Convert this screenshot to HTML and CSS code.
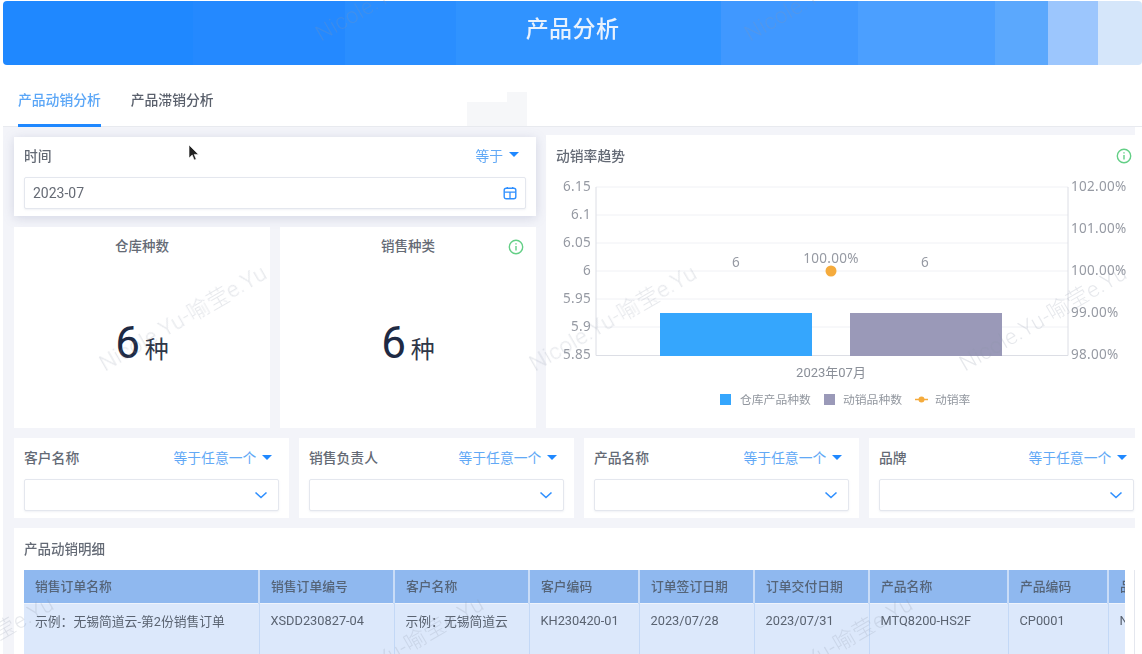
FILE: index.html
```html
<!DOCTYPE html>
<html lang="zh-CN">
<head>
<meta charset="utf-8">
<title>产品分析</title>
<link rel="stylesheet" href="styles.css">
</head>
<body>
<div class="page">
  <header class="banner"><h1>产品分析</h1></header>
  <nav class="tabs">
    <a class="tab active">产品动销分析</a>
    <a class="tab">产品滞销分析</a>
  </nav>
  <main class="content">
    <section class="top">
      <div class="left">
        <div class="card filter-time">
          <div class="fhead"><span class="flabel">时间</span><span class="fop">等于<i class="caret"></i></span></div>
          <div class="field"><span>2023-07</span>
            <svg class="cal" viewBox="0 0 14 14" width="14" height="14"><rect x="1.2" y="2.2" width="11.6" height="10.6" rx="2" fill="none" stroke="#2e8fff" stroke-width="1.4"/><path d="M1.5 6.200h11M7 6.200v6.400M4.300 1v2M9.700 1v2" fill="none" stroke="#2e8fff" stroke-width="1.3"/></svg>
          </div>
        </div>
        <div class="stats">
          <div class="card stat"><div class="stat-title">仓库种数</div><div class="stat-value"><b>6</b><span>种</span></div></div>
          <div class="card stat"><div class="stat-title">销售种类</div><div class="stat-value"><b>6</b><span>种</span></div>
            <svg class="info stat-info" viewBox="0 0 16 16" width="16" height="16"><circle cx="8" cy="8" r="6.7" fill="none" stroke="#63cf86" stroke-width="1.4"/><path d="M8 4.200v1.400M8 7v4.600" stroke="#63cf86" stroke-width="1.4"/></svg>
          </div>
        </div>
      </div>
      <div class="card chart">
        <div class="chart-head"><span class="flabel">动销率趋势</span>
          <svg class="info" viewBox="0 0 16 16" width="16" height="16"><circle cx="8" cy="8" r="6.7" fill="none" stroke="#63cf86" stroke-width="1.4"/><path d="M8 4.200v1.400M8 7v4.600" stroke="#63cf86" stroke-width="1.4"/></svg>
        </div>
        <svg class="plot" viewBox="546 170 596 258" width="596" height="258">
          <g class="grid">
            <path d="M596 187H1068M596 215H1068M596 243H1068M596 271H1068M596 299H1068M596 327H1068"/>
          </g>
          <path class="axis" d="M596 187V355.5H1068V187"/>
          <rect x="660" y="313" width="152" height="43" fill="#35a6fd"/>
          <rect x="850" y="313" width="152" height="43" fill="#9a99b8"/>
          <g class="tick end">
            <text x="591" y="191">6.15</text><text x="591" y="219">6.1</text><text x="591" y="247">6.05</text><text x="591" y="275">6</text><text x="591" y="303">5.95</text><text x="591" y="331">5.9</text><text x="591" y="359">5.85</text>
          </g>
          <g class="tick">
            <text x="1071" y="191">102.00%</text><text x="1071" y="233">101.00%</text><text x="1071" y="275">100.00%</text><text x="1071" y="317">99.00%</text><text x="1071" y="359">98.00%</text>
          </g>
          <g class="tick mid">
            <text x="736" y="267">6</text><text x="831" y="263">100.00%</text><text x="925" y="267">6</text>
          </g>
          <circle cx="831" cy="271" r="5.5" fill="#f5ab3c"/>
          <text class="xlabel" x="831" y="377">2023年07月</text>
          <rect x="720" y="394" width="11" height="11" fill="#35a6fd"/>
          <text class="legend" x="740" y="404">仓库产品种数</text>
          <rect x="824" y="394" width="11" height="11" fill="#9a99b8"/>
          <text class="legend" x="843" y="404">动销品种数</text>
          <path d="M915 399.500H928" stroke="#f5ab3c" stroke-width="1.500"/><circle cx="921.500" cy="399.500" r="3" fill="#f5ab3c"/>
          <text class="legend" x="935" y="404">动销率</text>
        </svg>
      </div>
    </section>
    <section class="filters">
      <div class="card filter"><div class="fhead"><span class="flabel">客户名称</span><span class="fop">等于任意一个<i class="caret"></i></span></div><div class="field"><svg class="chev" viewBox="0 0 14 8" width="14" height="8"><path d="M1.500 1.500 7 6.500l5.500-5" fill="none" stroke="#2e8fff" stroke-width="1.600"/></svg></div></div>
      <div class="card filter"><div class="fhead"><span class="flabel">销售负责人</span><span class="fop">等于任意一个<i class="caret"></i></span></div><div class="field"><svg class="chev" viewBox="0 0 14 8" width="14" height="8"><path d="M1.500 1.500 7 6.500l5.500-5" fill="none" stroke="#2e8fff" stroke-width="1.600"/></svg></div></div>
      <div class="card filter"><div class="fhead"><span class="flabel">产品名称</span><span class="fop">等于任意一个<i class="caret"></i></span></div><div class="field"><svg class="chev" viewBox="0 0 14 8" width="14" height="8"><path d="M1.500 1.500 7 6.500l5.500-5" fill="none" stroke="#2e8fff" stroke-width="1.600"/></svg></div></div>
      <div class="card filter"><div class="fhead"><span class="flabel">品牌</span><span class="fop">等于任意一个<i class="caret"></i></span></div><div class="field"><svg class="chev" viewBox="0 0 14 8" width="14" height="8"><path d="M1.500 1.500 7 6.500l5.500-5" fill="none" stroke="#2e8fff" stroke-width="1.600"/></svg></div></div>
    </section>
    <section class="card detail">
      <div class="detail-title">产品动销明细</div>
      <div class="table-wrap">
        <table>
          <colgroup>
            <col class="c1"><col class="c2"><col class="c3"><col class="c4"><col class="c5"><col class="c6"><col class="c7"><col class="c8"><col class="c9">
          </colgroup>
          <thead>
            <tr><th>销售订单名称</th><th>销售订单编号</th><th>客户名称</th><th>客户编码</th><th>订单签订日期</th><th>订单交付日期</th><th>产品名称</th><th>产品编码</th><th>品牌</th></tr>
          </thead>
          <tbody>
            <tr><td>示例：无锡简道云-第2份销售订单</td><td>XSDD230827-04</td><td>示例：无锡简道云</td><td>KH230420-01</td><td>2023/07/28</td><td>2023/07/31</td><td>MTQ8200-HS2F</td><td>CP0001</td><td>NE</td></tr>
          </tbody>
        </table>
      </div>
    </section>
  </main>
  <div class="smudge s1"></div>
  <div class="smudge s2"></div>
  <svg class="cursor" viewBox="0 0 12 18" width="12" height="18"><path d="M1 1v13l3.200-3 2 5 2-.8-2-4.800h4.300z" fill="#222" stroke="#fff" stroke-width=".6"/></svg>
  <span class="wm w1">Nicole.Yu-喻莹e.Yu</span>
  <span class="wm w2">Nicole.Yu-喻莹e.Yu</span>
  <span class="wm w3">Nicole.Yu-喻莹e.Yu</span>
  <span class="wm w4">Nicole.Yu-喻莹e.Yu</span>
  <span class="wm w5">Nicole.Yu-喻莹e.Yu</span>
  <span class="wm w6">Nicole.Yu-喻莹e.Yu</span>
  <span class="wm w7">Nicole.Yu-喻莹e.Yu</span>
  <span class="wm w8">Nicole.Yu-喻莹e.Yu</span>
</div>
</body>
</html>
```
FILE: styles.css
```css
* { box-sizing: border-box; }
html, body { margin: 0; padding: 0; background: #fff; }
body {
  font-family: Roboto, "Noto Sans CJK SC", sans-serif;
  color: #4c5360;
  width: 1142px;
  height: 654px;
  overflow: hidden;
}
.page {
  position: relative;
  width: 1142px;
  height: 654px;
  overflow: hidden;
  padding: 1px 0 0 3px;
  display: flex;
  flex-direction: column;
  filter: blur(0.5px);
}
.banner {
  height: 64px;
  flex: none;
  border-radius: 4px;
  background: linear-gradient(90deg,
    #1f88ff 0, #1f88ff 190px,
    #2489ff 190px, #2489ff 342px,
    #2a8eff 342px, #2a8eff 453px,
    #3093ff 453px, #3093ff 718px,
    #4098ff 718px, #4098ff 855px,
    #4b9fff 855px, #4b9fff 992px,
    #5ba8fd 992px, #5ba8fd 1045px,
    #9cc6fd 1045px, #9cc6fd 1095px,
    #d5e6fa 1095px);
  display: flex;
  align-items: center;
  justify-content: center;
}
.banner h1 {
  margin: 0 0 13px;
  font-size: 23px;
  font-weight: 500;
  letter-spacing: 0.4px;
  color: #e9f2fd;
}
.tabs {
  flex: none;
  height: 62px;
  display: flex;
  align-items: stretch;
  padding-left: 15px;
  gap: 30px;
  border-bottom: 1px solid #e8eaef;
}
.tab {
  font-size: 13.800px;
  font-weight: 500;
  display: flex;
  align-items: center;
  padding-top: 8px;
  color: #5a606c;
  border-bottom: 3px solid transparent;
  margin-bottom: -1px;
}
.tab.active { color: #5aa6f7; border-bottom-color: #1f88ff; }
.content {
  flex: 1;
  width: 1132px;
  min-height: 0;
  background: #f3f4f9;
  padding: 8px 0 0 11px;
  display: flex;
  flex-direction: column;
  gap: 10px;
}
.card { background: #fff; }
.top {
  flex: none;
  display: flex;
  gap: 10px;
  height: 293px;
}
.left {
  width: 522px;
  flex: none;
  padding-top: 2px;
  display: flex;
  flex-direction: column;
  gap: 11px;
}
.filter-time {
  height: 79px;
  padding: 0 10px;
  box-shadow: 0 2px 10px rgba(130, 136, 175, .28);
  position: relative;
}
.fhead {
  height: 40px;
  display: flex;
  align-items: center;
  justify-content: space-between;
  padding-right: 7px;
  padding-bottom: 5px;
}
.filter .fhead { height: 41px; padding-bottom: 3px; }
.flabel { font-size: 13.800px; color: #646a75; font-weight: 500; }
.fop { font-size: 13.800px; color: #62a9f6; display: flex; align-items: center; }
.caret {
  display: inline-block;
  margin-left: 6px;
  width: 0; height: 0;
  border-left: 5.500px solid transparent;
  border-right: 5.500px solid transparent;
  border-top: 5.500px solid #1f88ff;
}
.field {
  height: 32px;
  border: 1px solid #e4e7ee;
  border-radius: 2px;
  display: flex;
  align-items: center;
  justify-content: space-between;
  padding: 0 8px;
  font-size: 14px;
  color: #666b75;
  box-shadow: 0 1px 2px rgba(130, 136, 175, .12);
  background: #fff;
}
.stats { flex: 1; display: grid; grid-template-columns: 256px 256px; gap: 10px; }
.stat {
  position: relative;
  display: flex;
  flex-direction: column;
  align-items: center;
  padding-top: 9px;
}
.stat-title { font-size: 13.500px; color: #646a75; font-weight: 500; line-height: 20px; }
.stat-value {
  flex: 1;
  display: flex;
  align-items: baseline;
  justify-content: center;
  gap: 5px;
  padding-top: 59px;
  color: #1e2a44;
}
.stat-value b { font-size: 44px; font-weight: 400; line-height: 56px; }
.stat-value span { font-size: 24px; line-height: 30px; color: #2f3748; }
.stat-info { position: absolute; top: 12px; right: 12px; }
.chart { flex: 1; margin-right: -10px; display: flex; flex-direction: column; }
.chart-head {
  height: 35px;
  flex: none;
  padding: 5px 13px 0 10px;
  display: flex;
  align-items: center;
  justify-content: space-between;
}
.chart-head .info { margin-top: 2px; }
.plot { display: block; flex: none; }
.grid path { stroke: #f0f1f5; stroke-width: 1; fill: none; }
.axis { stroke: #dcdee5; stroke-width: 1; fill: none; }
.tick text { font-family: "Noto Sans", sans-serif; font-size: 13.500px; fill: #969aa3; letter-spacing: .3px; }
.tick.end text { text-anchor: end; }
.tick.mid text { text-anchor: middle; }
.xlabel { font-size: 13px; fill: #8a8f98; text-anchor: middle; }
.legend { font-size: 11.800px; fill: #92979f; }
.filters {
  flex: none;
  display: grid;
  grid-template-columns: repeat(4, 275.300px);
  gap: 9.700px;
  height: 80px;
}
.filter { padding: 0 10px; }
.chev { margin-left: auto; margin-right: 2px; }
.detail {
  flex: 1;
  min-height: 0;
  padding: 0 0 0 10px;
  overflow: hidden;
}
.detail-title { font-size: 13.500px; font-weight: 500; color: #646a75; height: 42px; padding-bottom: 2px; display: flex; align-items: center; }
.table-wrap {
  width: 1111px;
  height: 84px;
  overflow: hidden;
  padding-right: 10px;
  border-right: 1px solid #e4e7ee;
}
table { border-collapse: collapse; table-layout: fixed; width: 1101px; }
.c1 { width: 235px; } .c2 { width: 135px; } .c3 { width: 135px; } .c4 { width: 110px; }
.c5 { width: 115px; } .c6 { width: 115px; } .c7 { width: 139px; } .c8 { width: 100px; } .c9 { width: 17px; }
th {
  height: 33px;
  background: #8fb8ef;
  color: #556478;
  font-size: 12.800px;
  font-weight: 500;
  text-align: left;
  padding: 0 0 2px 11px;
  border-right: 2px solid #c9dcf7;
  white-space: nowrap;
  overflow: hidden;
}
td {
  height: 51px;
  background: #dce8fb;
  color: #5a6371;
  font-size: 12.800px;
  padding: 0 0 16px 11px;
  border-right: 1px solid #c3d8f6;
  border-top: 1px solid #eef3fc;
  white-space: nowrap;
  overflow: hidden;
  vertical-align: middle;
}
th:last-child, td:last-child { border-right: 0; }
.smudge { position: absolute; background: #f6f7f9; }
.s1 { left: 467px; top: 102px; width: 60px; height: 24px; }
.s2 { left: 507px; top: 92px; width: 20px; height: 12px; }
.cursor { position: absolute; left: 188px; top: 144px; }
.wm {
  position: absolute;
  font-size: 22px;
  font-weight: 300;
  line-height: 26px;
  letter-spacing: .4px;
  white-space: nowrap;
  color: rgba(140, 150, 170, .22);
  transform: rotate(-30deg);
  transform-origin: left bottom;
  pointer-events: none;
}
.w1 { left: 108px; top: 351px; }
.w2 { left: 538px; top: 351px; }
.w3 { left: 968px; top: 351px; }
.w4 { left: 324px; top: 21px; }
.w5 { left: 753px; top: 21px; }
.w6 { left: -105px; top: 682px; }
.w7 { left: 325px; top: 682px; }
.w8 { left: 754px; top: 682px; }
```
